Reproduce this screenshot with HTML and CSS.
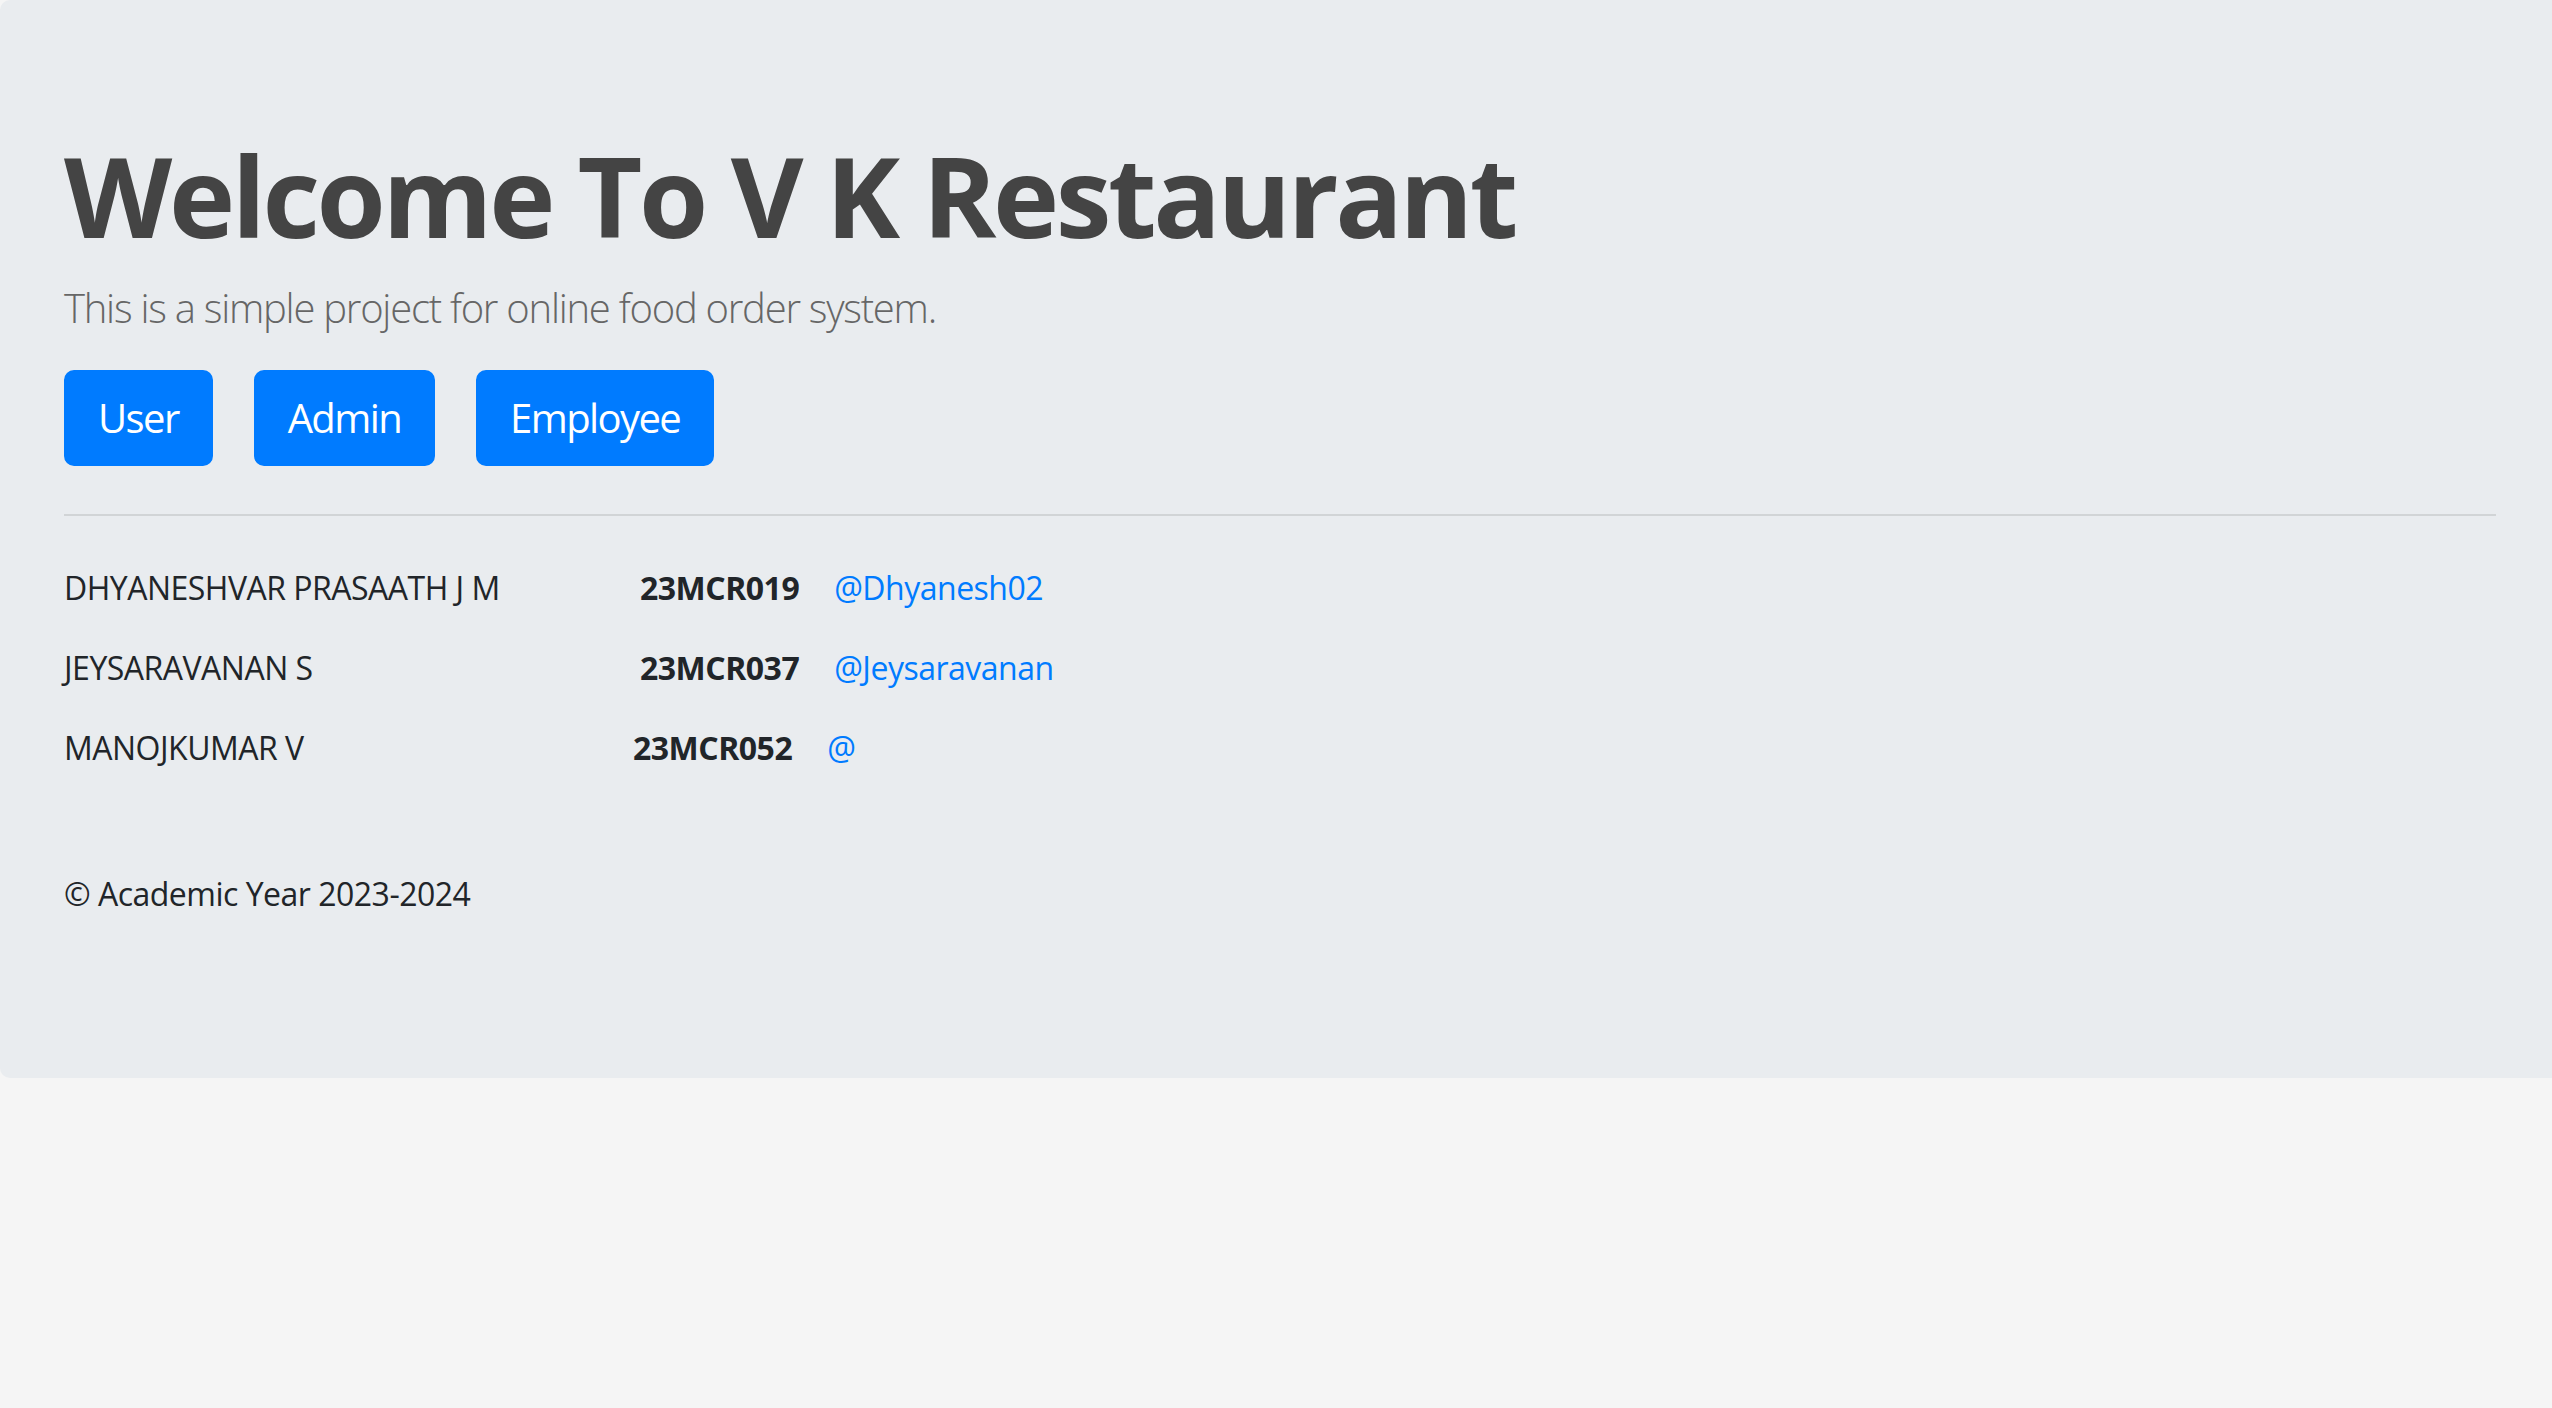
FILE: index.html
```html
<!DOCTYPE html>
<html lang="en">
<head>
<meta charset="utf-8">
<title>V K Restaurant</title>
<link rel="stylesheet" href="styles.css">
</head>
<body>
<div class="jumbotron">
  <h1 class="display">Welcome To V K Restaurant</h1>
  <p class="lead">This is a simple project for online food order system.</p>
  <div class="actions">
    <a class="btn" href="#">User</a>
    <a class="btn" href="#">Admin</a>
    <a class="btn" href="#">Employee</a>
  </div>
  <hr class="divider">
  <p class="member"><span class="name">DHYANESHVAR PRASAATH J M</span><b class="reg">23MCR019</b><a class="handle" href="#">@Dhyanesh02</a></p>
  <p class="member"><span class="name">JEYSARAVANAN S</span><b class="reg">23MCR037</b><a class="handle" href="#">@Jeysaravanan</a></p>
  <p class="member member-short"><span class="name">MANOJKUMAR V</span><b class="reg">23MCR052</b><a class="handle" href="#">@</a></p>
  <p class="footer">© Academic Year 2023-2024</p>
</div>
</body>
</html>
```
FILE: styles.css
```css
html, body {
  margin: 0;
  padding: 0;
}
body {
  background: #f5f5f5;
  font-family: "Open Sans", "Noto Sans", sans-serif;
  font-size: 32px;
  line-height: 1.5;
  color: #212529;
  letter-spacing: -0.5px;
  overflow: hidden;
}
.jumbotron {
  background: #e9ecef;
  padding: 128px 56px 128px 64px;
  border-radius: 10px 0 0 10px;
  margin-bottom: 64px;
}
.display {
  margin: 0 0 16px;
  font-size: 112px;
  font-weight: 700;
  line-height: 1.2;
  color: #444444;
  letter-spacing: -3.4px;
}
.lead {
  margin: 0 0 32px;
  font-size: 40px;
  font-weight: 300;
  color: #666666;
  letter-spacing: -1.25px;
}
.actions {
  display: flex;
  gap: 41px;
}
.btn {
  display: inline-block;
  padding: 16px 32px;
  font-size: 40px;
  line-height: 1.5;
  color: #fff;
  background: #007bff;
  border: 2px solid #007bff;
  border-radius: 10px;
  text-decoration: none;
  letter-spacing: -1.6px;
}
.divider {
  margin: 48px 0;
  border: 0;
  border-top: 2px solid rgba(0,0,0,0.1);
}
.member {
  display: flex;
  margin: 0 0 32px;
}
.name {
  width: 576px;
  flex: none;
}
.reg {
  font-weight: 700;
}
.handle {
  margin-left: 35px;
  color: #007bff;
  text-decoration: none;
}
.member-short .reg {
  margin-left: -7px;
}
.footer {
  margin: 98px 0 32px;
}
```
